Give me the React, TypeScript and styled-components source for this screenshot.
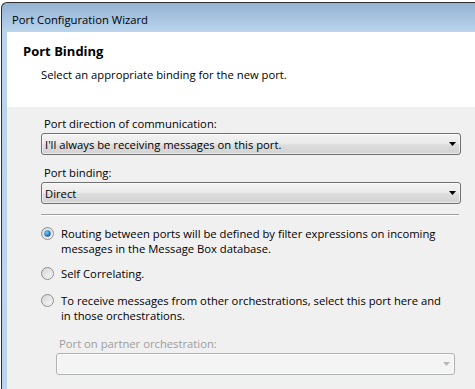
import styled, { createGlobalStyle } from 'styled-components'

const GlobalStyle = createGlobalStyle`
    body {
        margin: 0;
        background: #ffffff;
        font-family: 'Open Sans', 'Noto Sans', sans-serif;
        font-size: 11.25px;
        color: #000;
    }
`

const Window = styled.div`
    margin: 2px 0 0 1px;
    height: 387px;
    border-top: 1px solid #2e2e2e;
    border-left: 1px solid #2e2e2e;
    border-top-left-radius: 6px;
    padding-left: 5px;
    display: flex;
    flex-direction: column;
    background: linear-gradient(#94b3d2 0, #bad4ec 29px, #bcd5ee 100%);
    overflow: hidden;
`

const TitleBar = styled.div`
    height: 29px;
    flex: none;
    display: flex;
    align-items: center;
    padding: 3px 0 0 5px;
    box-sizing: border-box;
`

const Client = styled.div`
    flex: 1;
    display: flex;
    flex-direction: column;
    background: #f0f0f0;
`

const Header = styled.div`
    height: 75px;
    box-sizing: border-box;
    background: #ffffff;
    padding: 11px 0 0 16px;
    display: flex;
    flex-direction: column;
    gap: 8px;
`

const Heading = styled.div`
    font-weight: 700;
    font-size: 13px;
    line-height: 16px;
`

const Subtitle = styled.div`
    padding-left: 18px;
    line-height: 16px;
`

const Body = styled.div`
    padding: 9px 14px 0 34px;
    display: flex;
    flex-direction: column;
`

const Label = styled.div<{ $disabled?: boolean }>`
    line-height: 15px;
    padding-left: 3px;
    margin-bottom: 2px;
    color: ${(p) => (p.$disabled ? '#9d9d9d' : '#000')};
`

const Combo = styled.div<{ $disabled?: boolean }>`
    height: 22px;
    box-sizing: border-box;
    display: flex;
    align-items: center;
    justify-content: space-between;
    padding: 0 4px 0 3px;
    border-radius: 3px;
    border: 1px solid ${(p) => (p.$disabled ? '#adb2b5' : '#707070')};
    background: ${(p) =>
        p.$disabled
            ? '#f4f4f4'
            : 'linear-gradient(#f3f3f3 0%, #ebebeb 45%, #dddddd 55%, #d2d2d2 100%)'};
    box-shadow: inset 0 0 0 1px rgba(255, 255, 255, 0.55);
    color: ${(p) => (p.$disabled ? '#9d9d9d' : '#000')};
`

const Group = styled.div`
    display: flex;
    flex-direction: column;
    margin-bottom: 10px;
`

const Separator = styled.div`
    height: 1px;
    margin: 0 2px 11px 0;
    background: #a0a0a0;
    box-shadow: 0 1px 0 #ffffff;
`

const Option = styled.div<{ $gap: number }>`
    display: flex;
    align-items: flex-start;
    gap: 7px;
    margin-bottom: ${(p) => p.$gap}px;
    line-height: 15px;
`

const RadioBox = styled.div`
    flex: none;
    width: 13px;
    height: 15px;
    display: flex;
    align-items: center;
`

const Partner = styled.div`
    padding: 0 6px 0 15px;
    display: flex;
    flex-direction: column;
`

function Arrow({ disabled }: { disabled?: boolean }) {
    return (
        <svg width="7" height="4" viewBox="0 0 7 4">
            <path d="M0 0H7L3.5 4Z" fill={disabled ? '#b8b8b8' : '#000'} />
        </svg>
    )
}

function Radio({ checked }: { checked?: boolean }) {
    return (
        <svg width="13" height="13" viewBox="0 0 13 13">
            <defs>
                <linearGradient id="rf" x1="0" y1="0" x2="1" y2="1">
                    <stop offset="0" stopColor="#cfcfcf" />
                    <stop offset="1" stopColor="#ffffff" />
                </linearGradient>
                <radialGradient id="rd" cx="0.4" cy="0.35" r="0.7">
                    <stop offset="0" stopColor="#7ccbf5" />
                    <stop offset="0.6" stopColor="#2a86cf" />
                    <stop offset="1" stopColor="#154f8c" />
                </radialGradient>
            </defs>
            <circle cx="6.5" cy="6.5" r="6" fill="url(#rf)" stroke="#8e8f8f" />
            <circle cx="6.5" cy="6.5" r="4.2" fill="none" stroke="#e4e4e4" strokeWidth="1" />
            {checked && <circle cx="6.5" cy="6.5" r="3.2" fill="url(#rd)" />}
        </svg>
    )
}

export default function App() {
    return (
        <>
            <GlobalStyle />
            <Window>
                <TitleBar>Port Configuration Wizard</TitleBar>
                <Client>
                    <Header>
                        <Heading>Port Binding</Heading>
                        <Subtitle>Select an appropriate binding for the new port.</Subtitle>
                    </Header>
                    <Body>
                        <Group>
                            <Label>Port direction of communication:</Label>
                            <Combo>
                                <span>I'll always be receiving messages on this port.</span>
                                <Arrow />
                            </Combo>
                        </Group>
                        <Group>
                            <Label>Port binding:</Label>
                            <Combo>
                                <span>Direct</span>
                                <Arrow />
                            </Combo>
                        </Group>
                        <Separator />
                        <Option $gap={10}>
                            <RadioBox>
                                <Radio checked />
                            </RadioBox>
                            <div>
                                Routing between ports will be defined by filter expressions on incoming
                                <br />
                                messages in the Message Box database.
                            </div>
                        </Option>
                        <Option $gap={12}>
                            <RadioBox>
                                <Radio />
                            </RadioBox>
                            <div>Self Correlating.</div>
                        </Option>
                        <Option $gap={13}>
                            <RadioBox>
                                <Radio />
                            </RadioBox>
                            <div>
                                To receive messages from other orchestrations, select this port here and
                                <br />
                                in those orchestrations.
                            </div>
                        </Option>
                        <Partner>
                            <Label $disabled>Port on partner orchestration:</Label>
                            <Combo $disabled>
                                <span />
                                <Arrow disabled />
                            </Combo>
                        </Partner>
                    </Body>
                </Client>
            </Window>
        </>
    )
}
